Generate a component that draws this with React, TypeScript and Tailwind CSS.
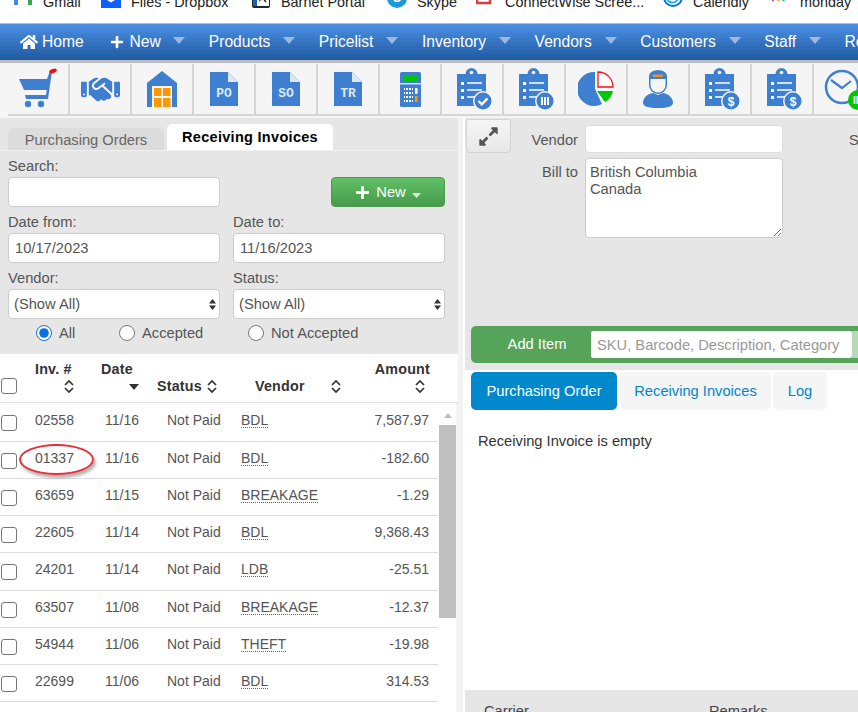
import { FaHome, FaPlus, FaExpandAlt } from 'react-icons/fa'
import { FaHandshake } from 'react-icons/fa6'

const BLUE = '#3f7fcf'

const bookmarks = [
  { label: 'Gmail', w: 'w-[87px]', gap: 'gap-[11px]', icon: 'gmail' },
  { label: 'Files - Dropbox', w: 'w-[150px]', gap: 'gap-[10px]', icon: 'dropbox' },
  { label: 'Barnet Portal', w: 'w-[136px]', gap: 'gap-[10px]', icon: 'barnet' },
  { label: 'Skype', w: 'w-[89px]', gap: 'gap-[10px]', icon: 'skype' },
  { label: 'ConnectWise Scree...', w: 'w-[187px]', gap: 'gap-[9px]', icon: 'cw' },
  { label: 'Calendly', w: 'w-[109px]', gap: 'gap-[10px]', icon: 'calendly' },
  { label: 'monday', w: 'w-[90px]', gap: 'gap-[15px]', icon: 'monday' }
]

const navItems = ['Products', 'Pricelist', 'Inventory', 'Vendors', 'Customers', 'Staff']

const rows = [
  ['02558', '11/16', 'BDL', '7,587.97'],
  ['01337', '11/16', 'BDL', '-182.60'],
  ['63659', '11/15', 'BREAKAGE', '-1.29'],
  ['22605', '11/14', 'BDL', '9,368.43'],
  ['24201', '11/14', 'LDB', '-25.51'],
  ['63507', '11/08', 'BREAKAGE', '-12.37'],
  ['54944', '11/06', 'THEFT', '-19.98'],
  ['22699', '11/06', 'BDL', '314.53']
]

function BookmarkIcon({ name }: { name: string }) {
  if (name === 'gmail') {
    return (
      <svg width="18" height="14" viewBox="0 0 18 14">
        <path d="M0 0h4v14H0z" fill="#4285f4" />
        <path d="M14 0h4v14h-4z" fill="#34a853" />
        <path d="M0 1l9 7 9-7v-1h-3L9 4 3 0H0z" fill="#ea4335" />
      </svg>
    )
  }
  if (name === 'dropbox') {
    return (
      <svg width="20" height="20" viewBox="0 0 20 20">
        <rect width="20" height="20" fill="#0d5fff" />
        <path d="M6 1l4 2.5L6 6 2 3.5zM14 1l4 2.5L14 6l-4-2.5zM6 6l4 2.5L6 11 2 8.5zM14 6l4 2.5-4 2.5-4-2.5zM6 12l4-2.500 4 2.500-4 2.500z" fill="#fff" />
      </svg>
    )
  }
  if (name === 'barnet') {
    return (
      <svg width="20" height="20" viewBox="0 0 20 20">
        <rect x="1" width="18" height="20" rx="2" fill="#1f2933" />
        <rect x="6" width="12" height="18" fill="#fff" />
        <rect x="2" width="4" height="18" fill="#1d5fa8" />
        <path d="M9 4v8l6-8M11 9l4 5" stroke="#222" strokeWidth="1.4" fill="none" />
      </svg>
    )
  }
  if (name === 'skype') {
    return (
      <svg width="20" height="20" viewBox="0 0 20 20">
        <circle cx="10" cy="10" r="10" fill="#1c9ad6" />
        <text x="10" y="14" textAnchor="middle" fontSize="12" fontWeight="700" fill="#fff" fontFamily="Liberation Sans">S</text>
      </svg>
    )
  }
  if (name === 'cw') {
    return (
      <svg width="20" height="20" viewBox="0 0 20 20">
        <path d="M1 0v15h13V0" fill="none" stroke="#e0383c" strokeWidth="2.4" />
        <path d="M16 4h3v7h-3z" fill="none" stroke="#e0383c" strokeWidth="1.6" />
      </svg>
    )
  }
  if (name === 'calendly') {
    return (
      <svg width="20" height="20" viewBox="0 0 20 20">
        <circle cx="10" cy="9" r="9" fill="none" stroke="#0b6bf0" strokeWidth="2" />
        <path d="M4 6a6 6 0 0 0 11 5" fill="none" stroke="#17b8e8" strokeWidth="2" />
      </svg>
    )
  }
  return (
    <svg width="13" height="8" viewBox="0 0 13 8">
      <path d="M1 6l2.500-5" stroke="#e2445c" strokeWidth="2.400" strokeLinecap="round" />
      <path d="M6 6l2.500-5" stroke="#fdab3d" strokeWidth="2.400" strokeLinecap="round" />
      <circle cx="11.500" cy="5.500" r="1.500" fill="#00c875" />
    </svg>
  )
}

function NavCaret() {
  return (
    <svg width="12" height="7" viewBox="0 0 12 7" className="mb-[3px] shrink-0">
      <path d="M0 0h12L6 7z" fill="#9db9e0" />
    </svg>
  )
}

function SortIcon() {
  return (
    <svg width="10" height="15" viewBox="0 0 10 15">
      <path d="M1 6l4-4 4 4M1 9l4 4 4-4" fill="none" stroke="#333" strokeWidth="1.700" />
    </svg>
  )
}

function Check() {
  return <div className="w-[16px] h-[16px] rounded-[3px] border-[1.5px] border-[#767676] bg-white shrink-0" />
}

function ClipIcon({ children }: { children: React.ReactNode }) {
  return (
    <svg width="40" height="44" viewBox="0 0 40 44">
      <path d="M5 7h8.500a6 6 0 0 1 12 0H34v32H5z" fill={BLUE} />
      <circle cx="19.500" cy="5.500" r="1.800" fill="#f5f5f5" />
      <path d="M9 15h3v3H9zM9 22h3v3H9zM9 29h3v3H9z" fill="#fff" />
      <path d="M15 16h15M15 23h15M15 30h8" stroke="#fff" strokeWidth="1.300" />
      <circle cx="31" cy="34" r="10" fill="#f5f5f5" />
      <circle cx="31" cy="34" r="8.500" fill={BLUE} />
      {children}
    </svg>
  )
}

function DocIcon({ label }: { label: string }) {
  return (
    <svg width="28" height="34" viewBox="0 0 28 34">
      <path d="M0 0h18l10 10v24H0z" fill={BLUE} />
      <path d="M18 0l10 10H18z" fill="#dce8f7" />
      <text x="14" y="25" textAnchor="middle" fontSize="13" fontWeight="700" fill="#dce8f7" fontFamily="Liberation Mono">{label}</text>
    </svg>
  )
}

const toolIcons = [
  <svg key="cart" width="40" height="42" viewBox="0 0 40 42">
    <path d="M1 11h28l3-8h2l-4 28H8l-1-4h21l.7-5H6z" fill={BLUE} />
    <circle cx="10" cy="36" r="3.200" fill={BLUE} />
    <circle cx="23" cy="36" r="3.200" fill={BLUE} />
    <ellipse cx="35" cy="3" rx="4" ry="2" fill="#e8131b" transform="rotate(-20 35 3)" />
  </svg>,
  <FaHandshake key="hands" size={39} color={BLUE} />,
  <svg key="house" width="30" height="36" viewBox="0 0 30 36">
    <path d="M15 0l15 12v24H0V12z" fill={BLUE} />
    <path d="M5 15h20v21H5z" fill="#f5f5f5" />
    <path d="M7 17h7.500v8H7zM16 17h7.500v8H16zM7 27h7.500v9H7zM16 27h7.500v9H16z" fill="#ff9800" />
  </svg>,
  <DocIcon key="po" label="PO" />,
  <DocIcon key="so" label="SO" />,
  <DocIcon key="tr" label="TR" />,
  <svg key="calc" width="21" height="35" viewBox="0 0 21 35">
    <rect width="21" height="35" rx="1.500" fill={BLUE} />
    <rect x="3.500" y="4" width="14" height="5" fill="#00c400" />
    <rect y="11" width="21" height="1.500" fill="#cfe0f5" />
    <path d="M4 16h9v2H4zM4 20h9v2H4zM4 24h9v2H4zM4 28h9v2H4z" fill="#fff" />
    <path d="M5.500 16v14M8.500 16v14M11.500 16v14" stroke={BLUE} strokeWidth="1" />
    <rect x="15" y="24" width="2.500" height="6" fill="#ff9800" />
    <rect x="15" y="16" width="2.500" height="6" fill="#fff" />
  </svg>,
  <ClipIcon key="c1">
    <path d="M26.500 34l3.300 3.300 5.700-6" fill="none" stroke="#fff" strokeWidth="2.400" />
  </ClipIcon>,
  <ClipIcon key="c2">
    <path d="M27 30h2v8h-2zM30 30h2v8h-2zM33 30h2v8h-2z" fill="#fff" />
  </ClipIcon>,
  <svg key="pie" width="36" height="36" viewBox="0 0 36 36">
    <path d="M17 1v17l7 15A17 17 0 1 1 17 1z" fill={BLUE} />
    <path d="M20 1a15 15 0 0 1 15 15H20z" fill="#fff" stroke="#f0141e" strokeWidth="1.300" />
    <path d="M19 20h16a16 16 0 0 1-8 11z" fill="#00c800" />
  </svg>,
  <svg key="person" width="30" height="38" viewBox="0 0 30 38">
    <path d="M6 6a9 6 0 0 1 18 0v9a9 9 0 0 1-18 0z" fill={BLUE} />
    <path d="M7.500 9h15v6a7.500 7.500 0 0 1-15 0z" fill="#f5f5f5" />
    <path d="M10 4.500h10v2.500H10z" fill="#e8912a" />
    <path d="M10 23l5 2 5-2c6 1 10 5 10 10 0 3-5 5-15 5S0 36 0 33c0-5 4-9 10-10z" fill={BLUE} />
  </svg>,
  <ClipIcon key="c3">
    <text x="31" y="38.500" textAnchor="middle" fontSize="12" fontWeight="700" fill="#fff" fontFamily="Liberation Sans">$</text>
  </ClipIcon>,
  <ClipIcon key="c4">
    <text x="31" y="38.500" textAnchor="middle" fontSize="12" fontWeight="700" fill="#fff" fontFamily="Liberation Sans">$</text>
  </ClipIcon>,
  <svg key="clock" width="44" height="44" viewBox="0 0 44 44" className="overflow-visible">
    <circle cx="20" cy="20" r="16" fill="none" stroke={BLUE} strokeWidth="2.500" />
    <path d="M9 13l11 8 9-7" fill="none" stroke={BLUE} strokeWidth="2.200" />
    <circle cx="36" cy="33" r="10" fill="#00c800" />
    <text x="36" y="37" textAnchor="middle" fontSize="10" fontWeight="700" fill="#fff" fontFamily="Liberation Sans">IN</text>
  </svg>
]

function Field({ label, value }: { label: string; value?: string }) {
  return (
    <div className="flex flex-col w-[212px]">
      <label className="h-[26px] leading-[30px]">{label}</label>
      <input
        readOnly
        value={value ?? ''}
        className="h-[30px] rounded-[4px] border border-[#ccc] bg-white px-[6px] text-[#555] outline-none"
      />
    </div>
  )
}

function ShowAll({ label }: { label: string }) {
  return (
    <div className="flex flex-col w-[212px]">
      <label className="h-[26px] leading-[30px]">{label}</label>
      <div className="relative">
        <select className="h-[30px] w-full appearance-none rounded-[4px] border border-[#ccc] bg-white px-[5px] text-[#555] outline-none">
          <option>(Show All)</option>
        </select>
        <svg width="7" height="11" viewBox="0 0 7 11" className="absolute right-[4px] top-[10px]">
          <path d="M3.500 0L7 4.500H0zM3.500 11L0 6.500h7z" fill="#333" />
        </svg>
      </div>
    </div>
  )
}

function Radio({ label, checked, className }: { label: string; checked?: boolean; className: string }) {
  return (
    <label className={`flex items-center gap-[7px] ${className}`}>
      <input type="radio" name="accepted" defaultChecked={checked} className="w-[16px] h-[16px] m-0 accent-[#0b6fe0]" />
      {label}
    </label>
  )
}

export default function App() {
  return (
    <div className="h-[712px] w-[858px] overflow-hidden bg-white text-[14.7px] text-[#555] font-['Liberation_Sans',Arial,sans-serif]">
      {/* Browser bookmarks */}
      <div className="h-[23px] flex items-start pl-[14px] overflow-hidden whitespace-nowrap text-[14.4px] text-[#222] bg-white">
        {bookmarks.map((b) => (
          <div key={b.label} className={`${b.w} ${b.gap} shrink-0 flex items-center h-[14px] -mt-[4px]`}>
            <span className="shrink-0 -translate-y-[5px]"><BookmarkIcon name={b.icon} /></span>
            <span>{b.label}</span>
          </div>
        ))}
      </div>

      {/* Main menu */}
      <div className="h-[37px] border-t border-[#bbb] bg-gradient-to-b from-[#4c90e6] to-[#1f5a9f] flex items-center pl-[20px] text-[15.6px] text-white whitespace-nowrap overflow-hidden">
        <FaHome size={18} className="mr-[4px] shrink-0" />
        <span className="mr-[26px] shrink-0">Home</span>
        <FaPlus size={14} className="mr-[6px] shrink-0" />
        <span className="mr-[12px] shrink-0">New</span>
        <NavCaret />
        <div className="w-[24px] shrink-0" />
        {navItems.map((n) => (
          <div key={n} className="flex items-center gap-[13px] mr-[23.5px] shrink-0">
            <span>{n}</span>
            <NavCaret />
          </div>
        ))}
        <span className="shrink-0">Reports</span>
      </div>

      {/* Toolbar */}
      <div className="h-[58px] border-t-[3px] border-[#b9bcc2] bg-[#f5f5f5] pl-[8px] pt-[1px] flex overflow-hidden">
        <div className="flex h-[52px] border-b-2 border-[#d6d6d6]">
          {toolIcons.map((icon, i) => (
            <div key={i} className="w-[62px] h-[50px] shrink-0 flex items-center justify-center border-r-2 border-[#d6d6d6]">
              {icon}
            </div>
          ))}
        </div>
      </div>

      <div className="flex h-[594px]">
        {/* Left column */}
        <div className="w-[458px] shrink-0 flex flex-col">
          <div className="h-[236px] bg-[#e6e6e6] shrink-0">
            <div className="h-[33px] pl-[8px] flex items-end gap-[3px] border-b border-[#f0f0f0]">
              <div className="w-[156px] h-[22px] rounded-t-[5px] bg-[#dcdcdc] text-center leading-[24px] text-[#666]">Purchasing Orders</div>
              <div className="w-[166px] h-[26px] rounded-t-[5px] bg-white text-center leading-[26px] text-[14.5px] font-bold tracking-[0.3px] text-black">Receiving Invoices</div>
            </div>
            <div className="px-[8px] flex flex-col">
              <div className="flex justify-between items-end">
                <Field label="Search:" />
                <button className="h-[30px] w-[114px] mr-[5px] rounded-[4px] border border-[#4a9a4e] bg-gradient-to-b from-[#62c066] to-[#469a4a] text-white flex items-center justify-center gap-[6px]">
                  <FaPlus size={15} />
                  New
                  <svg width="9" height="5" viewBox="0 0 9 5" className="mt-[6px]">
                    <path d="M0 0h9L4.500 5z" fill="#d6ecd7" />
                  </svg>
                </button>
              </div>
              <div className="flex gap-[13px]">
                <Field label="Date from:" value="10/17/2023" />
                <Field label="Date to:" value="11/16/2023" />
              </div>
              <div className="flex gap-[13px]">
                <ShowAll label="Vendor:" />
                <ShowAll label="Status:" />
              </div>
              <div className="flex h-[28px] items-center">
                <Radio label="All" checked className="ml-[28px] w-[83px]" />
                <Radio label="Accepted" className="w-[129px]" />
                <Radio label="Not Accepted" className="" />
              </div>
            </div>
          </div>

          {/* Invoice table */}
          <div className="h-[49px] shrink-0 flex items-end pb-[8px] border-b-[1px] border-[#e4e4e4] text-[#333] font-bold text-[14.3px] leading-[20px] tracking-[0.2px] bg-white">
            <div className="w-[35px] pl-[1px]"><Check /></div>
            <div className="w-[66px] flex flex-col">
              <span>Inv. #</span>
              <span className="pl-[29px] h-[15px]"><SortIcon /></span>
            </div>
            <div className="w-[56px] flex flex-col">
              <span>Date</span>
              <svg width="10" height="6" viewBox="0 0 10 6" className="ml-[28px] mt-[5px] mb-[4px]">
                <path d="M0 0h10L5 6z" fill="#333" />
              </svg>
            </div>
            <div className="w-[98px] flex items-center gap-[5px] -mb-[2px]">
              Status <SortIcon />
            </div>
            <div className="w-[120px] flex items-center gap-[26px] -mb-[2px]">
              Vendor <SortIcon />
            </div>
            <div className="w-[55px] flex flex-col items-end">
              <span>Amount</span>
              <span className="pr-[5px] h-[15px]"><SortIcon /></span>
            </div>
          </div>
          <div className="flex flex-1 min-h-0">
            <div className="w-[438px] shrink-0 text-[14px]">
              {rows.map((r, i) => (
                <div
                  key={r[0]}
                  className={`flex items-center pb-[4px] border-b border-[#dcdcdc] ${i === 0 ? 'h-[39px]' : i === 4 ? 'h-[38px]' : 'h-[37px]'}`}
                >
                  <div className="w-[35px] pl-[1px] pt-[5px]"><Check /></div>
                  <div className="w-[70px] relative">
                    {r[0]}
                    {r[0] === '01337' && (
                      <div className="absolute -left-[16px] -top-[4px] w-[75px] h-[31px] rounded-[50%] border-2 border-[#e8303a] shadow-[2px_3px_3px_rgba(0,0,0,0.3)]" />
                    )}
                  </div>
                  <div className="w-[62px]">{r[1]}</div>
                  <div className="w-[74px]">Not Paid</div>
                  <div className="flex-1">
                    <span className="border-b border-dotted border-[#666] leading-none inline-block">{r[2]}</span>
                  </div>
                  <div className="pr-[9px]">{r[3]}</div>
                </div>
              ))}
            </div>
            {/* Scrollbar */}
            <div className="w-[17px] ml-[1px] shrink-0 flex flex-col items-center">
              <svg width="8" height="5" viewBox="0 0 8 5" className="mt-[10px] mb-[7px]">
                <path d="M4 0l4 5H0z" fill="#bdbdbd" />
              </svg>
              <div className="w-[17px] h-[193px] bg-[#bfbfbf]" />
            </div>
            <div className="w-[2px] bg-[#f2f2f2]" />
          </div>
        </div>

        <div className="w-[5px] shrink-0 bg-[#f2f2f2]" />
        <div className="w-[2px] shrink-0 bg-white" />

        {/* Right column */}
        <div className="flex-1 min-w-0 flex flex-col overflow-hidden">
          <div className="h-[252px] shrink-0 bg-[#e6e6e6] flex flex-col">
            <div className="flex h-[208px] items-start">
              <button className="shrink-0 mt-[1px] ml-[1px] w-[45px] h-[34px] rounded-b-[4px] rounded-t-[2px] border border-[#d4d4d4] bg-gradient-to-b from-[#f5f5f5] to-[#e8e8e8] flex items-center justify-center text-[#555]">
                <FaExpandAlt size={21} />
              </button>
              <div className="w-[67px] shrink-0 pt-[11px] text-right">
                <div className="h-[28px]">Vendor</div>
                <div className="mt-[4px]">Bill to</div>
              </div>
              <div className="ml-[7px] pt-[7px] flex flex-col gap-[5px] w-[198px] shrink-0">
                <input readOnly className="h-[28px] rounded-[4px] border border-[#ddd] bg-white outline-none" />
                <textarea
                  readOnly
                  defaultValue={'British Columbia\nCanada'}
                  className="h-[80px] rounded-[4px] border border-[#ccc] bg-white px-[4px] py-[5px] leading-[17px] text-[#555] outline-none"
                />
              </div>
              <div className="ml-[66px] pt-[11px]">S</div>
            </div>
            <div className="ml-[6px] h-[37px] rounded-l-[5px] bg-[#55a45a] flex items-center text-white">
              <div className="w-[120px] pl-[12px] shrink-0 text-center">Add Item</div>
              <input
                readOnly
                placeholder="SKU, Barcode, Description, Category"
                className="w-[261px] h-[27px] shrink-0 rounded-[2px] bg-white px-[6px] outline-none placeholder:text-[#999]"
              />
              <div className="flex-1 h-[27px] bg-[#b8d8ba]" />
            </div>
          </div>

          <div className="flex pl-[6px] gap-[2px] pt-[2px] h-[40px] shrink-0">
            <div className="w-[146px] h-[38px] rounded-[5px] bg-[#0088cc] text-white flex items-center justify-center">Purchasing Order</div>
            <div className="ml-[1px] w-[151px] h-[38px] rounded-[5px] bg-[#f5f5f5] text-[#0088cc] flex items-center justify-center">Receiving Invoices</div>
            <div className="w-[54px] h-[38px] rounded-[5px] bg-[#f5f5f5] text-[#0088cc] flex items-center justify-center">Log</div>
          </div>
          <div className="flex-1 pl-[13px] pt-[20px] text-[#333]">Receiving Invoice is empty</div>
          <div className="h-[22px] shrink-0 bg-[#e6e6e6] flex pl-[19px] pt-[10px] gap-[180px] text-[#444] whitespace-nowrap">
            <span>Carrier</span>
            <span>Remarks</span>
          </div>
        </div>
      </div>
    </div>
  )
}
